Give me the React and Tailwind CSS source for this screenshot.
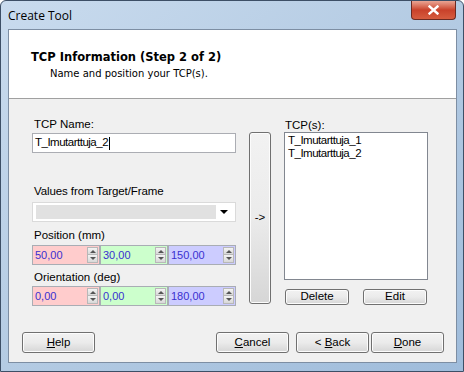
import React from "react";

const ui = { fontFamily: '"Liberation Sans", Arial, sans-serif' };

function Spinner({ value, bg }) {
    return (
        <div className={`flex h-[20px] w-[68px] border border-[#a9adb4] ${bg}`}>
            <div className="flex-1 pl-[2px] text-[11px] leading-[18px] text-[#3a2fd0]">{value}</div>
            <div className="my-[1px] mr-[1px] flex w-[11px] flex-col bg-white">
                <div className="flex h-[8px] items-center justify-center border border-[#b8b8b8] bg-gradient-to-b from-[#f4f4f4] to-[#d8d8d8]">
                    <div className="h-0 w-0 border-x-[3px] border-b-[3px] border-x-transparent border-b-[#555]" />
                </div>
                <div className="flex h-[8px] items-center justify-center border border-t-0 border-[#b8b8b8] bg-gradient-to-b from-[#f4f4f4] to-[#d8d8d8]">
                    <div className="h-0 w-0 border-x-[3px] border-t-[3px] border-x-transparent border-t-[#555]" />
                </div>
            </div>
        </div>
    );
}

function Btn({ children, className = "" }) {
    return (
        <div className={`flex items-center justify-center rounded-[3px] border border-[#707070] bg-gradient-to-b from-[#f2f2f2] via-[#ebebeb] to-[#d6d6d6] text-[11.5px] text-black shadow-[inset_0_0_0_1px_#fcfcfc] ${className}`}>
            {children}
        </div>
    );
}

export default function App() {
    return (
        <div className="relative h-[372px] w-[464px] overflow-hidden rounded-t-[6px] border border-[#3d4f66] bg-gradient-to-br from-[#c9dbee] via-[#b4cbe3] to-[#9fbcdb]" style={ui}>
            {/* Title bar */}
            <div className="flex h-[28px] items-start justify-between">
                <div className="pl-[7px] pt-[6px] text-[12px] text-black" style={{ fontFamily: '"Open Sans", "Noto Sans", sans-serif' }}>Create Tool</div>
                <div className="mr-[7px] flex h-[19px] w-[45px] items-center justify-center rounded-b-[4px] border border-t-0 border-[#6b2a22] bg-gradient-to-b from-[#e9a594] via-[#c9412a] to-[#d65c3f]">
                    <svg width="11" height="10" viewBox="0 0 11 10">
                        <path d="M1.5 1.5 L9.5 8.5 M9.5 1.5 L1.5 8.5" stroke="#fff" strokeWidth="2.4" strokeLinecap="square" />
                    </svg>
                </div>
            </div>

            {/* Client area */}
            <div className="ml-[7px] flex h-[334px] w-[449px] flex-col border border-[#7d8ea3]">
                {/* Header */}
                <div className="h-[69px] border-b border-[#a0a0a0] bg-white pl-[22px] pt-[19px]" style={{ fontFamily: '"DejaVu Sans", sans-serif' }}>
                    <div className="text-[11.5px] font-bold leading-[16px] text-black">TCP Information (Step 2 of 2)</div>
                    <div className="pl-[19px] pt-[2px] text-[10px] leading-[14px] text-black">Name and position your TCP(s).</div>
                </div>

                {/* Body */}
                <div className="flex flex-1 flex-col bg-[#f0f0f0] text-[11.5px]">
                    <div className="flex pl-[23px] pt-[18px]">
                        {/* Left column */}
                        <div className="flex w-[204px] flex-col">
                            <div className="pl-[2px] leading-[14px]">TCP Name:</div>
                            <div className="mt-[2px] flex h-[20px] items-center border border-[#abadb3] bg-white pl-[2px] tracking-[-0.5px]">
                                T_Imutarttuja_2<span className="ml-[1px] h-[13px] w-px bg-black" />
                            </div>
                            <div className="mt-[31px] pl-[2px] leading-[14px] tracking-[-0.1px]">Values from Target/Frame</div>
                            <div className="mt-[4px] flex h-[20px] items-center border border-[#dadada] bg-white px-[3px]">
                                <div className="h-[14px] w-[180px] bg-[#e1e1e1]" />
                                <div className="flex flex-1 justify-center">
                                    <div className="h-0 w-0 border-x-[4px] border-t-[4px] border-x-transparent border-t-black" />
                                </div>
                            </div>
                            <div className="mt-[6px] pl-[2px] leading-[14px]">Position (mm)</div>
                            <div className="mt-[3px] flex">
                                <Spinner value="50,00" bg="bg-[#ffcccc]" />
                                <Spinner value="30,00" bg="bg-[#ccffcc]" />
                                <Spinner value="150,00" bg="bg-[#ccccff]" />
                            </div>
                            <div className="mt-[5px] pl-[2px] leading-[14px]">Orientation (deg)</div>
                            <div className="mt-[2px] flex">
                                <Spinner value="0,00" bg="bg-[#ffcccc]" />
                                <Spinner value="0,00" bg="bg-[#ccffcc]" />
                                <Spinner value="180,00" bg="bg-[#ccccff]" />
                            </div>
                        </div>

                        {/* Arrow button */}
                        <Btn className="ml-[13px] mt-[15px] h-[172px] w-[22px]">-&gt;</Btn>

                        {/* Right column */}
                        <div className="ml-[13px] flex w-[144px] flex-col">
                            <div className="mt-[2px] pl-px leading-[13px]">TCP(s):</div>
                            <div className="h-[148px] border border-[#828790] bg-white px-[3px] pt-[1px] leading-[13px] tracking-[-0.5px]">
                                <div>T_Imutarttuja_1</div>
                                <div>T_Imutarttuja_2</div>
                            </div>
                            <div className="mt-[9px] flex justify-between pl-px pr-px">
                                <Btn className="h-[16px] w-[64px]">Delete</Btn>
                                <Btn className="h-[16px] w-[64px]">Edit</Btn>
                            </div>
                        </div>
                    </div>

                    {/* Bottom buttons */}
                    <div className="mt-auto mb-[9px] flex pl-[13px]">
                        <Btn className="h-[21px] w-[73px]"><span><span className="underline">H</span>elp</span></Btn>
                        <Btn className="ml-[121px] h-[21px] w-[73px]"><span><span className="underline">C</span>ancel</span></Btn>
                        <Btn className="ml-[7px] h-[21px] w-[73px]"><span>&lt; <span className="underline">B</span>ack</span></Btn>
                        <Btn className="ml-[2px] h-[21px] w-[73px]"><span><span className="underline">D</span>one</span></Btn>
                    </div>
                </div>
            </div>
        </div>
    );
}
